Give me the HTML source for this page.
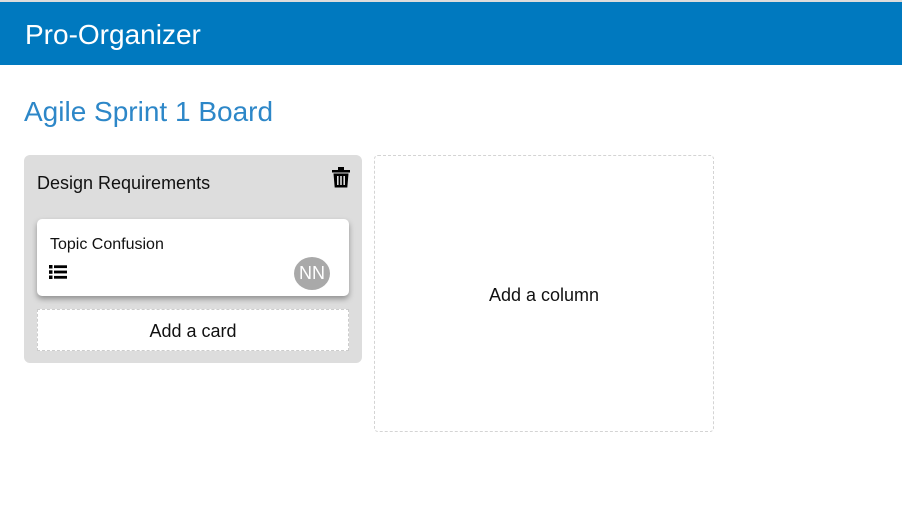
<!DOCTYPE html>
<html><head><meta charset="utf-8"><style>
*{box-sizing:border-box;margin:0;padding:0}
body{width:902px;height:505px;background:#fff;font-family:"Segoe UI","Liberation Sans",sans-serif;position:relative;overflow:hidden}
.strip{position:absolute;left:0;top:0;width:902px;height:2px;background:#dcdcdc}
.hdr{position:absolute;left:0;top:2px;width:902px;height:63px;background:#0079bf;color:#fff;font-size:28px;padding-left:25px;line-height:66px}
.title{position:absolute;left:24px;top:96px;font-size:28px;color:#2d87c8;font-weight:300}
.col{position:absolute;left:24px;top:155px;width:338px;height:208px;background:#dddddd;border-radius:6px}
.col h3{position:absolute;left:13px;top:18px;font-size:18px;font-weight:400;color:#111}
.trash{position:absolute;left:308px;top:12px}
.card{position:absolute;left:13px;top:64px;width:312px;height:77px;background:#fff;border-radius:5px;box-shadow:0 3px 6px rgba(0,0,0,.35)}
.card .t{position:absolute;left:13px;top:17px;font-size:16px;color:#111}
.list{position:absolute;left:12px;top:46px}
.av{position:absolute;left:257px;top:38px;width:36px;height:33px;border-radius:50%;background:#a9a9a9;color:#fff;font-size:18px;text-align:center;line-height:33px}
.add{position:absolute;left:13px;top:154px;width:312px;height:42px;background:#fff;border:1px dashed #ccc;font-size:18px;text-align:center;line-height:42px;color:#111}
.addcol{position:absolute;left:374px;top:155px;width:340px;height:277px;border:1px dashed #d4d4d4;border-radius:4px;font-size:18px;text-align:center;line-height:279px;color:#111}
</style></head><body>
<div class="strip"></div>
<div class="hdr">Pro-Organizer</div>
<div class="title">Agile Sprint 1 Board</div>
<div class="col">
<h3>Design Requirements</h3>
<svg class="trash" width="18" height="21" viewBox="0 0 18 21"><rect x="0" y="3" width="18" height="2.5" fill="#000"/><rect x="6" y="0" width="6" height="3" fill="#000"/><path d="M1.5 6.5h15l-1.2 14H2.7z" fill="#000"/><rect x="5" y="9" width="1.6" height="9" fill="#ddd"/><rect x="8.2" y="9" width="1.6" height="9" fill="#ddd"/><rect x="11.4" y="9" width="1.6" height="9" fill="#ddd"/></svg>
<div class="card"><div class="t">Topic Confusion</div>
<svg class="list" width="18" height="14" viewBox="0 0 18 14"><rect x="0" y="0" width="3.5" height="3.5" fill="#000"/><rect x="0" y="5.3" width="3.5" height="3.5" fill="#000"/><rect x="0" y="10.5" width="3.5" height="3.5" fill="#000"/><rect x="5" y="0.3" width="13" height="2.8" fill="#000"/><rect x="5" y="5.6" width="13" height="2.8" fill="#000"/><rect x="5" y="10.9" width="13" height="2.8" fill="#000"/></svg>
<div class="av">NN</div></div>
<div class="add">Add a card</div>
</div>
<div class="addcol">Add a column</div>
</body></html>
